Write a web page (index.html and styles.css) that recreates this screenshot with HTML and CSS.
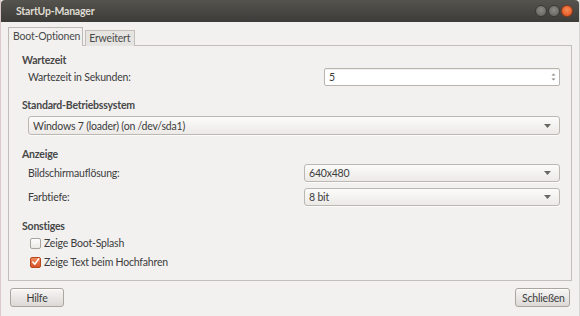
FILE: index.html
```html
<!DOCTYPE html>
<html lang="de">
<head>
<meta charset="utf-8">
<title>StartUp-Manager</title>
<link rel="stylesheet" href="styles.css">
</head>
<body>
<div class="window">
  <div class="titlebar">
    <span class="title">StartUp-Manager</span>
    <div class="wbuttons">
      <span class="wbtn"></span>
      <span class="wbtn"></span>
      <span class="wbtn close"></span>
    </div>
  </div>
  <div class="content">
    <div class="notebook">
      <div class="tabs">
        <div class="tab active">Boot-Optionen</div>
        <div class="tab">Erweitert</div>
      </div>
      <div class="page">
        <div class="heading">Wartezeit</div>
        <div class="row row-spin">
          <span class="label">Wartezeit in Sekunden:</span>
          <div class="spin">
            <span class="spin-value">5</span>
            <span class="spin-arrows">
              <svg width="5" height="10" viewBox="0 0 5 10"><path d="M0.5 3.5 L2.5 1.5 L4.5 3.5Z M0.5 6.5 L2.5 8.5 L4.5 6.5Z" fill="#8a8782"/></svg>
            </span>
          </div>
        </div>

        <div class="heading h-os">Standard-Betriebssystem</div>
        <div class="combo combo-os">
          <span>Windows 7 (loader) (on /dev/sda1)</span>
          <svg class="arrow" width="7" height="4" viewBox="0 0 7 4"><path d="M0 0 L7 0 L3.5 4Z" fill="#6b6863"/></svg>
        </div>

        <div class="heading h-disp">Anzeige</div>
        <div class="row row-combo">
          <span class="label">Bildschirmauflösung:</span>
          <div class="combo">
            <span>640x480</span>
            <svg class="arrow" width="7" height="4" viewBox="0 0 7 4"><path d="M0 0 L7 0 L3.5 4Z" fill="#6b6863"/></svg>
          </div>
        </div>
        <div class="row row-combo row-second">
          <span class="label">Farbtiefe:</span>
          <div class="combo">
            <span>8 bit</span>
            <svg class="arrow" width="7" height="4" viewBox="0 0 7 4"><path d="M0 0 L7 0 L3.5 4Z" fill="#6b6863"/></svg>
          </div>
        </div>

        <div class="heading h-misc">Sonstiges</div>
        <div class="check-row">
          <span class="checkbox"></span>
          <span class="label">Zeige Boot-Splash</span>
        </div>
        <div class="check-row check-second">
          <span class="checkbox checked">
            <svg width="10" height="10" viewBox="0 0 10 10"><path d="M2 5 L4.2 7.5 L8.5 1.5" fill="none" stroke="#fff" stroke-width="1.8" stroke-linecap="round" stroke-linejoin="round"/></svg>
          </span>
          <span class="label">Zeige Text beim Hochfahren</span>
        </div>
      </div>
    </div>
    <div class="buttons">
      <button class="btn">Hilfe</button>
      <button class="btn">Schließen</button>
    </div>
  </div>
</div>
</body>
</html>
```
FILE: styles.css
```css
* { box-sizing: border-box; }
html, body {
  margin: 0;
  padding: 0;
  width: 580px;
  height: 316px;
  overflow: hidden;
  background: #f2f1f0;
}
body {
  font-family: Lato, "Open Sans", sans-serif;
  font-size: 10.5px;
  letter-spacing: -0.2px;
  color: #3c3c3c;
}
.window {
  width: 580px;
  height: 316px;
  display: flex;
  flex-direction: column;
  background: #f2f1f0;
  border-left: 1px solid #d9c9c9;
  border-right: 1px solid #d8d6d2;
}
.titlebar {
  height: 22px;
  flex: none;
  background: linear-gradient(#55534e, #3d3c38);
  display: flex;
  align-items: center;
  justify-content: space-between;
  padding: 0 6px 1px 15px;
  border-radius: 4px 4px 0 0;
}
.title {
  color: #dfdbd2;
  font-weight: bold;
  font-size: 10.5px;
}
.wbuttons {
  display: flex;
  gap: 1px;
  align-items: center;
}
.wbtn {
  width: 12px;
  height: 12px;
  border-radius: 50%;
  background: radial-gradient(circle at 50% 40%, #8d8b86, #5f5d58);
  border: 1px solid #3a3935;
}
.wbtn.close {
  background: radial-gradient(circle at 50% 40%, #f88a56, #de4b17);
  border-color: #8f3a18;
}
.content {
  flex: 1;
  display: flex;
  flex-direction: column;
  padding: 5px 7px 0 7px;
}
.notebook {
  display: flex;
  flex-direction: column;
}
.tabs {
  display: flex;
  align-items: flex-end;
  height: 19px;
  margin-bottom: -1px;
  position: relative;
  z-index: 1;
}
.tab {
  height: 16px;
  line-height: 15px;
  padding: 0 4px 0 3px;
  border: 1px solid #c2bfba;
  border-bottom: none;
  background: #e6e4e1;
  color: #4a4a4a;
  margin-left: 2px;
}
.tab.active {
  height: 19px;
  line-height: 17px;
  margin-left: 0;
  padding: 0 2px 0 4px;
  background: #f2f1f0;
  border-color: #bdb9b3;
}
.page {
  border: 1px solid #c2bfba;
  background: #f2f1f0;
  padding: 7px 11px 9px 13px;
  display: flex;
  flex-direction: column;
}
.heading {
  font-weight: bold;
  line-height: 14px;
  height: 14px;
  color: #474747;
}
.h-os { margin-top: 12px; }
.h-disp { margin-top: 12px; }
.h-misc { margin-top: 13px; }
.label { line-height: 14px; }
.row {
  display: grid;
  align-items: center;
  padding-left: 6px;
  margin-top: 1px;
}
.row-spin { grid-template-columns: 296px 1fr; }
.row-combo { grid-template-columns: 276px 1fr; margin-top: 3px; }
.row-second { margin-top: 6px; }
.spin {
  height: 18px;
  background: #fff;
  border: 1px solid #b9b5ae;
  border-radius: 2px;
  display: flex;
  align-items: center;
  justify-content: space-between;
  padding: 0 3px 0 4px;
  box-shadow: inset 0 1px 1px rgba(0,0,0,0.06);
}
.spin-arrows { display: flex; }
.combo {
  height: 18px;
  border: 1px solid #bcb8b1;
  border-radius: 3px;
  background: linear-gradient(#fbfbfa, #eceae7);
  display: flex;
  align-items: center;
  justify-content: space-between;
  padding: 0 8px 0 4px;
  box-shadow: 0 1px 0 rgba(255,255,255,0.8);
}
.combo-os {
  height: 19px;
  margin-top: 4px;
  margin-left: 6px;
}
.arrow { flex: none; }
.check-row {
  display: flex;
  align-items: center;
  height: 18px;
  padding-left: 8px;
  gap: 3px;
  margin-top: 1px;
}
.checkbox {
  width: 11px;
  height: 11px;
  border: 1px solid #a8a49e;
  border-radius: 2px;
  background: linear-gradient(#fdfdfd, #ebe9e6);
  display: flex;
  align-items: center;
  justify-content: center;
}
.checkbox.checked {
  background: linear-gradient(#ef8a5c, #d8522a);
  border-color: #b8461f;
}
.buttons {
  display: flex;
  justify-content: space-between;
  margin-top: 7px;
  padding: 0 2px 0 2px;
}
.btn {
  font-family: inherit;
  font-size: 10.5px;
  letter-spacing: -0.2px;
  color: #3c3c3c;
  height: 19px;
  padding: 0 6px;
  border: 1px solid #aaa69f;
  border-radius: 3px;
  background: linear-gradient(#f7f6f5, #dcd9d5);
  box-shadow: inset 0 1px 0 rgba(255,255,255,0.7);
  line-height: 16px;
}
.btn:first-child { width: 54px; }
.btn:last-child { width: 55px; }
```
